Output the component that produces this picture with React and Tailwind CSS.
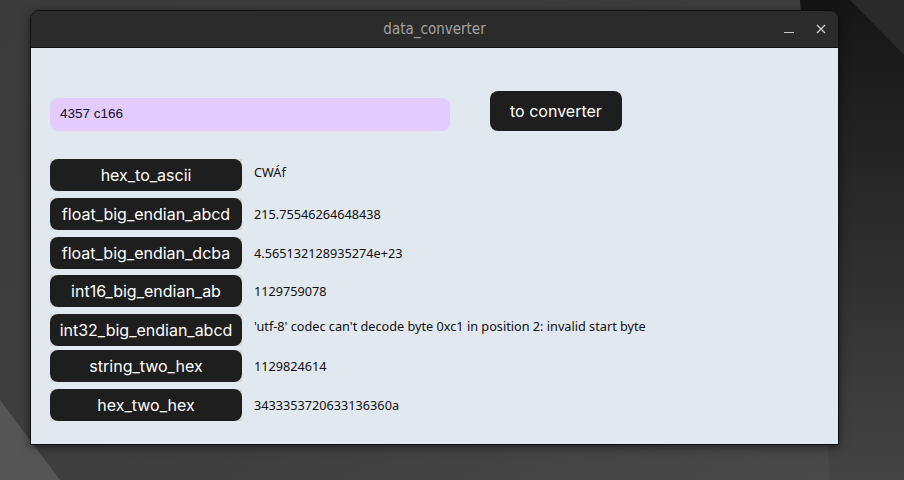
import React from 'react';

const rows = [
  { name: 'hex_to_ascii', value: 'CWÁf', mt: 'mt-0', align: 'items-start pt-[4px]' },
  { name: 'float_big_endian_abcd', value: '215.75546264648438', mt: 'mt-[7px]', align: 'items-center pt-[1px]' },
  { name: 'float_big_endian_dcba', value: '4.565132128935274e+23', mt: 'mt-[7px]', align: 'items-center pt-[1px]' },
  { name: 'int16_big_endian_ab', value: '1129759078', mt: 'mt-[6px]', align: 'items-center pt-[1px]' },
  { name: 'int32_big_endian_abcd', value: "'utf-8' codec can't decode byte 0xc1 in position 2: invalid start byte", mt: 'mt-[7px]', align: 'items-start pt-[3px]' },
  { name: 'string_two_hex', value: '1129824614', mt: 'mt-[4px]', align: 'items-center pt-[1px]' },
  { name: 'hex_two_hex', value: '3433353720633136360a', mt: 'mt-[7px]', align: 'items-center pt-[1px]' },
];

const Wallpaper = () => (
  <svg className="absolute inset-0" width="904" height="480" viewBox="0 0 904 480">
    <defs>
      <linearGradient id="bg" x1="0" y1="0" x2="1" y2="1">
        <stop offset="0" stopColor="#3b3b3b" />
        <stop offset="0.6" stopColor="#3f3f3f" />
        <stop offset="1" stopColor="#4a4a4a" />
      </linearGradient>
      <linearGradient id="dark" x1="0" y1="0" x2="0" y2="1">
        <stop offset="0" stopColor="#151515" />
        <stop offset="1" stopColor="#444444" />
      </linearGradient>
    </defs>
    <rect width="904" height="480" fill="url(#bg)" />
    <polygon points="800,0 904,0 904,480 830,480" fill="url(#dark)" />
    <polygon points="850,0 904,0 904,55" fill="#2a2a2a" />
    <polygon points="0,400 60,480 0,480" fill="#555555" />
  </svg>
);

const App = () => {
  return (
    <div className="relative w-[904px] h-[480px] overflow-hidden bg-[#3c3c3c]">
      <Wallpaper />
      {/* window */}
      <div className="relative ml-[30px] mt-[10px] w-[809px] h-[435px] flex flex-col rounded-t-[9px] overflow-hidden shadow-[0_2px_10px_rgba(0,0,0,0.5)] border border-[#111]">
        {/* title bar */}
        <div className="h-[37px] bg-[#2b2b2b] flex items-center justify-center relative border-b border-[#111]">
          <span className="text-[15px] text-[#a2a2a2]" style={{ fontFamily: '"DejaVu Sans Condensed", "Liberation Sans", sans-serif' }}>
            data_converter
          </span>
          <div className="absolute right-[12px] top-0 h-full flex items-center gap-[22px] text-[#c8c8c8]">
            <svg width="10" height="10" viewBox="0 0 10 10">
              <line x1="0" y1="8.5" x2="10" y2="8.5" stroke="#c8c8c8" strokeWidth="1.2" />
            </svg>
            <svg width="10" height="10" viewBox="0 0 10 10">
              <path d="M1 1 L9 9 M9 1 L1 9" stroke="#c8c8c8" strokeWidth="1.4" />
            </svg>
          </div>
        </div>

        {/* content */}
        <div className="flex-1 bg-[#e2e8f0] pl-[19px] pt-[43px]" style={{ fontFamily: 'Inter, sans-serif' }}>
          <div className="flex items-end gap-[40px]">
            <div className="w-[400px] h-[33px] rounded-[8px] bg-[#e3cbfe] flex items-center pl-[10px]">
              <span className="text-[13.5px] text-[#10102a]" style={{ fontFamily: '"Liberation Sans", sans-serif' }}>4357 c166</span>
            </div>
            <button className="h-[40px] px-[20px] rounded-[8px] bg-[#1e1e1e] text-white text-[16px]">
              to converter
            </button>
          </div>

          <div className="flex flex-col mt-[28px]">
            {rows.map((row) => (
              <div key={row.name} className={`flex ${row.mt}`}>
                <div className="bg-[#d6d6d6] shrink-0">
                  <div className="w-[192px] h-[32px] rounded-[8px] bg-[#1e1e1e] text-white text-[16px] flex items-center justify-center">
                    {row.name}
                  </div>
                </div>
                <div className={`flex ${row.align} pl-[12px] text-[12.7px] text-[#111]`} style={{ fontFamily: '"Noto Sans", sans-serif' }}>
                  {row.value}
                </div>
              </div>
            ))}
          </div>
        </div>
      </div>
    </div>
  );
};

export default App;
